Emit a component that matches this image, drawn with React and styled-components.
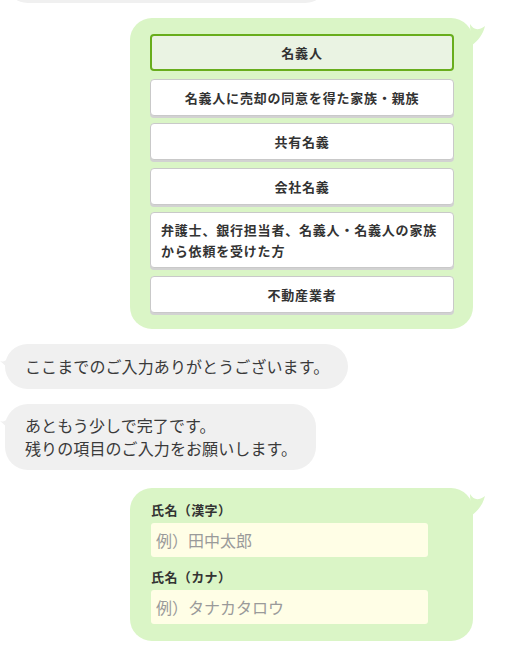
import React from "react";
import styled, { createGlobalStyle } from "styled-components";

const Global = createGlobalStyle`
  html, body { margin: 0; padding: 0; background: #fff; overflow: hidden; }
  body { font-family: "Noto Sans CJK JP", "Noto Sans", sans-serif; color: #333; }
  * { box-sizing: border-box; }
`;

const Chat = styled.div`
  width: 530px;
  display: flex;
  flex-direction: column;
  gap: 15px;
`;

const Row = styled.div`
  display: flex;
  justify-content: ${(p) => (p.$me ? "flex-end" : "flex-start")};
  padding: ${(p) => (p.$me ? "0 57px 0 0" : "0 0 0 5px")};
  margin-top: ${(p) => p.$mt || 0}px;
`;

const OtherBubble = styled.div`
  position: relative;
  background: #f0f0f0;
  border-radius: 23px;
  padding: ${(p) => (p.$multi ? "10px 19px 10px 20px" : "11px 19px 11px 20px")};
  font-size: 16px;
  line-height: 23px;
  letter-spacing: 0.1px;
  color: #3a3a3a;
  width: ${(p) => (p.$w ? `${p.$w}px` : "fit-content")};
  height: ${(p) => (p.$h ? `${p.$h}px` : "auto")};
`;

const OtherTail = styled.svg`
  position: absolute;
  left: -5px;
  top: 13px;
`;

const MyBubble = styled.div`
  position: relative;
  width: 343px;
  background: #daf5c6;
  border-radius: 22px;
  padding: ${(p) => p.$pad};
`;

const MyTail = styled.svg`
  position: absolute;
  right: -13px;
  top: 4px;
`;

const Choices = styled.div`
  display: flex;
  flex-direction: column;
  gap: 7.5px;
`;

const Choice = styled.button`
  display: block;
  width: 100%;
  font-family: inherit;
  font-size: 13px;
  font-weight: bold;
  line-height: 21px;
  letter-spacing: 0.8px;
  color: #333;
  text-align: ${(p) => (p.$left ? "left" : "center")};
  padding: ${(p) => (p.$selected ? "6px 9px" : p.$left ? "6px 10px" : "7px 10px")};
  background: ${(p) => (p.$selected ? "#eaf3e3" : "#fff")};
  border: ${(p) => (p.$selected ? "2px solid #68ad1c" : "1px solid #c9c9c9")};
  border-radius: 4px;
  box-shadow: ${(p) => (p.$selected ? "none" : "0 2px 0 #d2d2d2")};
  cursor: pointer;
`;

const Field = styled.div`
  display: flex;
  flex-direction: column;
  margin-top: ${(p) => p.$mt || 0}px;
`;

const Label = styled.label`
  font-size: 13px;
  font-weight: bold;
  line-height: 20px;
  letter-spacing: 0.4px;
  color: #333;
  margin-bottom: 3px;
`;

const Input = styled.input`
  width: 277px;
  height: 34px;
  border: none;
  border-radius: 3px;
  background: #fffee6;
  padding: 0 5px;
  font-family: inherit;
  font-size: 16px;
  color: #333;
  outline: none;
  &::placeholder { color: #9a9a9a; }
`;

const LeftTail = () => (
  <OtherTail width="8" height="12" viewBox="0 0 8 12">
    <path d="M8 1 C6 4 3 5 0 4 C3 6 5 9 8 11 Z" fill="#f0f0f0" />
  </OtherTail>
);

const RightTail = () => (
  <MyTail width="16" height="26" viewBox="0 0 16 26">
    <path d="M0 2 C4 8 8 9 15 4 C13 12 9 18 1 24 Z" fill="#daf5c6" />
  </MyTail>
);

const options = [
  { label: "名義人", selected: true },
  { label: "名義人に売却の同意を得た家族・親族" },
  { label: "共有名義" },
  { label: "会社名義" },
  { label: "弁護士、銀行担当者、名義人・名義人の家族から依頼を受けた方", left: true },
  { label: "不動産業者" },
];

export default function App() {
  return (
    <>
      <Global />
      <Chat>
        <Row $mt={-43}>
          <OtherBubble $w={323} $h={46} />
        </Row>
        <Row $me>
          <MyBubble $pad="16px 19px 16px 20px">
            <RightTail />
            <Choices>
              {options.map((o) => (
                <Choice key={o.label} $selected={o.selected} $left={o.left}>
                  {o.label}
                </Choice>
              ))}
            </Choices>
          </MyBubble>
        </Row>
        <Row>
          <OtherBubble>
            <LeftTail />
            ここまでのご入力ありがとうございます。
          </OtherBubble>
        </Row>
        <Row>
          <OtherBubble $multi>
            <LeftTail />
            あともう少しで完了です。
            <br />
            残りの項目のご入力をお願いします。
          </OtherBubble>
        </Row>
        <Row $me $mt={3}>
          <MyBubble $pad="12px 21px 17px 21px">
            <RightTail />
            <Field>
              <Label>氏名（漢字）</Label>
              <Input placeholder="例）田中太郎" />
            </Field>
            <Field $mt={10}>
              <Label>氏名（カナ）</Label>
              <Input placeholder="例）タナカタロウ" />
            </Field>
          </MyBubble>
        </Row>
      </Chat>
    </>
  );
}
